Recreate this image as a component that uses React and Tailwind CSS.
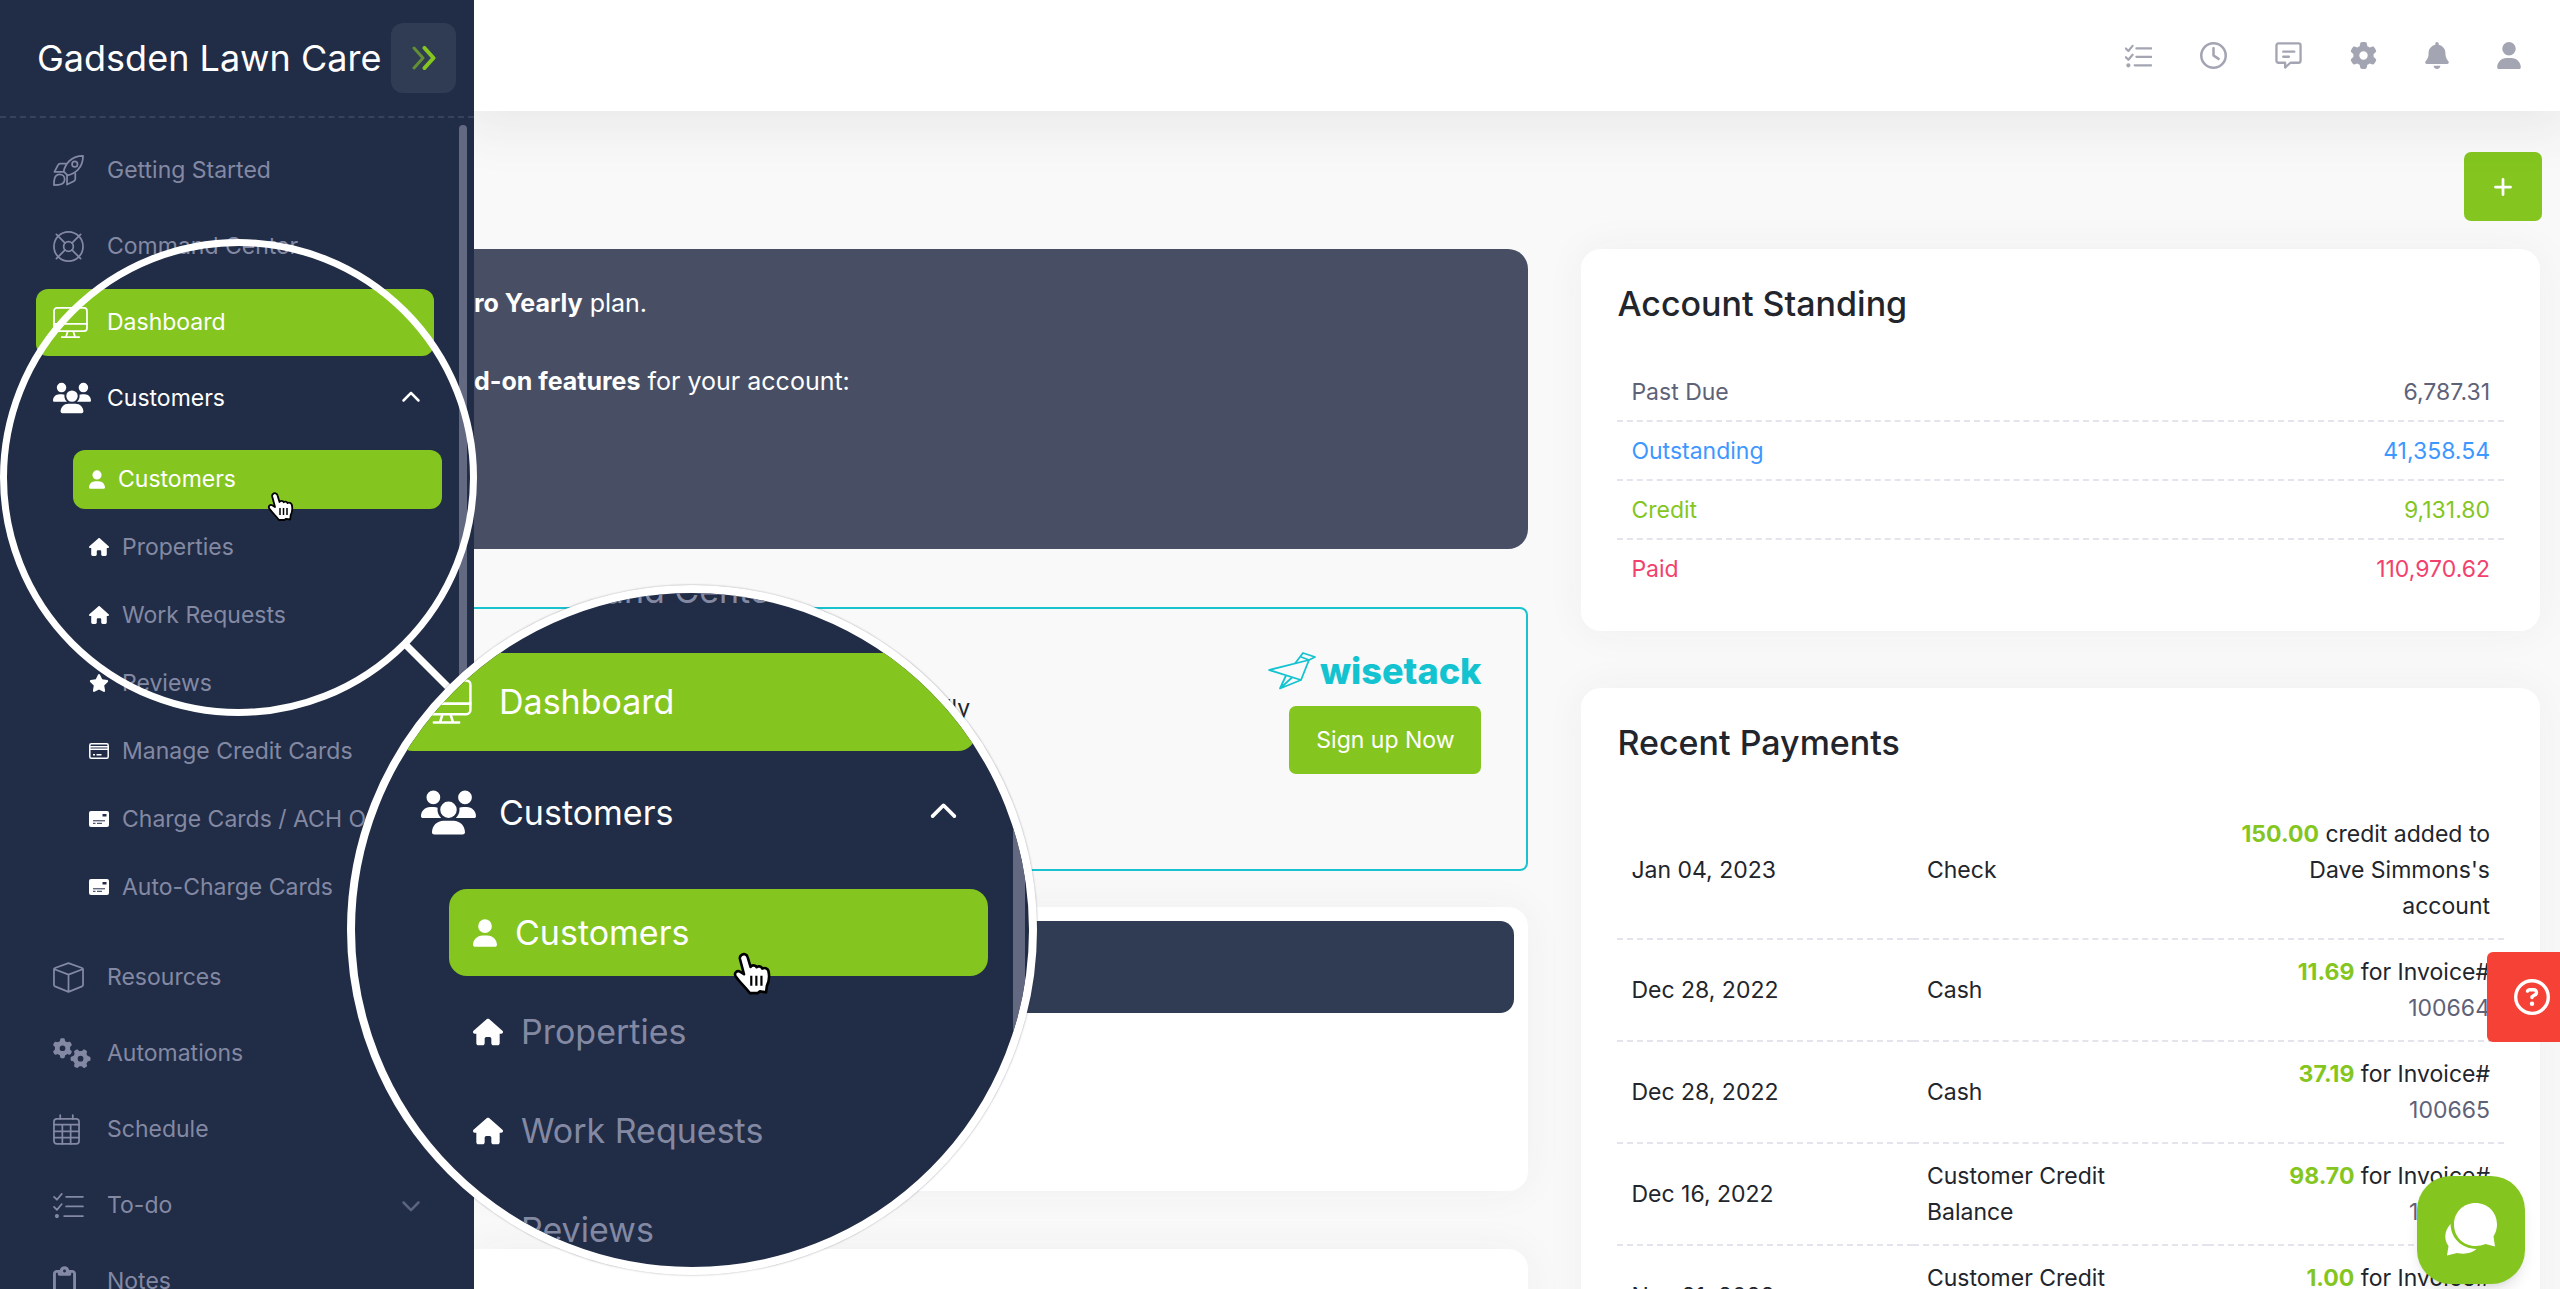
import {
  FaBell,
  FaChevronDown,
  FaChevronUp,
  FaGear,
  FaGears,
  FaHouse,
  FaPlus,
  FaRegCircleQuestion,
  FaRegClipboard,
  FaRegClock,
  FaStar,
  FaUser,
  FaUsers,
} from "react-icons/fa6";

function RocketIcon({ className }) {
  return (
    <svg viewBox="0 0 32 32" className={className} fill="none" stroke="currentColor" strokeWidth="1.8" strokeLinejoin="round" strokeLinecap="round">
      <path d="M11 17c1.500-7.500 7.500-16 20-16 0 12.500-8.500 18.500-16 20z" />
      <circle cx="22.500" cy="9.500" r="2.800" />
      <path d="M13 9H7.500c-1.200 0-2 .6-2.500 1.600L1.500 17.500H11" />
      <path d="M23 19v5.500c0 1.200-.6 2-1.600 2.500L14.500 30.500V21" />
      <path d="M1 31c0-5 .2-11 6-11 3 0 5 2.200 5 5 0 5.800-6 6-11 6z" />
    </svg>
  );
}

function LifeRingIcon({ className }) {
  return (
    <svg viewBox="0 0 32 32" className={className} fill="none" stroke="currentColor" strokeWidth="1.8" strokeLinecap="round">
      <circle cx="16" cy="16" r="15" />
      <circle cx="16" cy="16" r="5" />
      <path d="M3.500 3.500l9 9M28.500 3.500l-9 9M3.500 28.500l9-9M28.500 28.500l-9-9" />
    </svg>
  );
}

function MonitorIcon({ className }) {
  return (
    <svg viewBox="0 0 36 32" className={className} fill="none" stroke="currentColor" strokeWidth="1.8" strokeLinejoin="round" strokeLinecap="round">
      <rect x="1" y="1" width="34" height="24" rx="3" />
      <path d="M1 17.500h34M15 25.500l-1.500 5M21 25.500l1.500 5M9 31h18" />
    </svg>
  );
}

function CubeIcon({ className }) {
  return (
    <svg viewBox="0 0 32 32" className={className} fill="none" stroke="currentColor" strokeWidth="1.8" strokeLinejoin="round">
      <path d="M16 1.200L30 6.200q1 .4 1 1.400v16q0 1.200-1 1.600L16 30.800 2 25.200q-1-.4-1-1.600v-16q0-1 1-1.400zM1.500 7.500L16 13l14.500-5.500M16 13v17.500" />
    </svg>
  );
}

function CalendarIcon({ className }) {
  return (
    <svg viewBox="0 0 28 32" className={className} fill="none" stroke="currentColor" strokeWidth="1.8" strokeLinecap="round">
      <rect x="1" y="5" width="26" height="26" rx="3" />
      <path d="M7.500 1v4M20.500 1v4M1 11h26M1 18h26M1 24.500h26M9.700 11v20M18.300 11v20" />
    </svg>
  );
}

function TasksIcon({ className, strokeWidth = 1.8 }) {
  return (
    <svg viewBox="0 0 32 28" className={className} fill="none" stroke="currentColor" strokeWidth={strokeWidth} strokeLinecap="round" strokeLinejoin="round">
      <path d="M1 5l3 3 5-6M1 15.500l3 3 5-6M13.500 5H31M13.500 15H31M11.500 25H31" />
      <circle cx="4" cy="25" r="1.200" fill="currentColor" />
    </svg>
  );
}

function CommentIcon({ className }) {
  return (
    <svg viewBox="0 0 28 28" className={className} fill="none" stroke="currentColor" strokeWidth="2.400" strokeLinejoin="round" strokeLinecap="round">
      <path d="M3.500 1.500h21a2 2 0 0 1 2 2v16a2 2 0 0 1-2 2h-8.500l-5.500 5v-5h-7a2 2 0 0 1-2-2v-16a2 2 0 0 1 2-2z" />
      <path d="M8.500 10h11.500M8.500 15.300h6" />
    </svg>
  );
}

function CreditCardIcon({ className }) {
  return (
    <svg viewBox="0 0 20 16" className={className} fill="none" stroke="currentColor" strokeWidth="1.500">
      <rect x=".8" y=".8" width="18.400" height="14.400" rx="1.500" />
      <path d="M1 3.800h18M1 6.300h18M4 11.700h2M7.500 11.700h5" />
    </svg>
  );
}

function MoneyCheckIcon({ className }) {
  return (
    <svg viewBox="0 0 20 16" className={className}>
      <rect width="20" height="16" rx="2" fill="currentColor" />
      <path d="M13.500 3h4v2.500h-4z" fill="#212c46" />
      <path d="M4 9.800h12M4 12.300h2.500M8 12.300h5" stroke="#212c46" strokeWidth="1" />
    </svg>
  );
}

function DoubleChevronIcon({ className }) {
  return (
    <svg viewBox="0 0 24 24" className={className} fill="none" stroke="currentColor" strokeLinecap="round" strokeLinejoin="round">
      <path d="M2 2l9 10-9 10" strokeWidth="3" opacity=".6" />
      <path d="M12.500 2l9 10-9 10" strokeWidth="4" />
    </svg>
  );
}

function WisetackBird({ className }) {
  return (
    <svg viewBox="0 0 48 38" className={className} fill="none" stroke="currentColor" strokeWidth="1.800" strokeLinejoin="round">
      <path d="M1 18L41 8l-8 20z" />
      <path d="M27 11.500L35 1l12 4-6 3-9-3.500" />
      <path d="M18 23.500L12 36.500 33 28M12 36.500l12-11" />
    </svg>
  );
}

function ChatIcon({ className }) {
  return (
    <svg viewBox="0 0 52 54" className={className} fill="currentColor">
      <path d="M30.500 0C43 0 52 9.500 52 21.500c0 4.500-1.500 8.500-3.500 12L50 43.500l-9.500-2.500c-3 1.200-6.500 2-10 2C18 43 9 33.500 9 21.500S18 0 30.500 0z" />
      <path d="M5.500 21C6 35 16 45.500 31.500 46c-4.500 4.500-12 5.500-19.500 4L2 52.500 3.500 43C-1.500 36.500-.5 27.500 5.500 21z" />
    </svg>
  );
}

function HandCursor({ className }) {
  return (
    <svg viewBox="0 0 27 31" className={className} strokeLinejoin="round" aria-hidden="true">
      <path
        d="M6 3c1.500-1.500 4-.8 4.500 1.200L12.500 11c.5-1.500 3.500-1.500 4.200.2.700-1 3.300-.9 3.900.9 1.300-.9 3.700-.3 4.200 1.600.8 3.500.7 7-1.100 10.500l-.5 4.300-4.200-.7-1.500 1.200H12C9.500 25.500 5.500 22 2.300 17.500c-1.500-2.500.9-4.300 2.900-3.300L8 16 5.200 5.500C5 4.500 5.200 3.600 6 3z"
        fill="white"
        stroke="black"
        strokeWidth="1.800"
      />
      <path d="M13 17v7M16.500 17v7M20 17v7" stroke="black" strokeWidth="1.500" />
    </svg>
  );
}

const mainItems = [
  { label: "Getting Started", icon: <RocketIcon className="size-[31px]" /> },
  { label: "Command Center", icon: <LifeRingIcon className="size-[31px]" /> },
  { label: "Dashboard", icon: <MonitorIcon className="h-[31px] w-[35px]" />, active: true },
  { label: "Customers", icon: <FaUsers className="size-[38px]" />, open: true },
];

const customerItems = [
  { label: "Customers", icon: <FaUser className="h-[19px] w-4" />, active: true },
  { label: "Properties", icon: <FaHouse className="size-5" /> },
  { label: "Work Requests", icon: <FaHouse className="size-5" /> },
  { label: "Reviews", icon: <FaStar className="size-5" /> },
  { label: "Manage Credit Cards", icon: <CreditCardIcon className="h-4 w-5" /> },
  { label: "Charge Cards / ACH O", icon: <MoneyCheckIcon className="h-4 w-5" /> },
  { label: "Auto-Charge Cards", icon: <MoneyCheckIcon className="h-4 w-5" /> },
];

const moreItems = [
  { label: "Resources", icon: <CubeIcon className="size-[31px]" /> },
  { label: "Automations", icon: <FaGears className="size-[38px]" /> },
  { label: "Schedule", icon: <CalendarIcon className="h-[31px] w-[27px]" /> },
  { label: "To-do", icon: <TasksIcon className="h-[27px] w-[31px]" />, closed: true },
  { label: "Notes", icon: <FaRegClipboard className="h-[31px] w-[23px]" /> },
];

const standing = [
  { label: "Past Due", amount: "6,787.31", color: "text-[#5e6278]" },
  { label: "Outstanding", amount: "41,358.54", color: "text-[#3e97ff]" },
  { label: "Credit", amount: "9,131.80", color: "text-[#84c61f]" },
  { label: "Paid", amount: "110,970.62", color: "text-[#f1416c]" },
];

const payments = [
  { date: "Jan 04, 2023", method: "Check", amount: "150.00", text: "credit added to Dave Simmons's account" },
  { date: "Dec 28, 2022", method: "Cash", amount: "11.69", text: "for Invoice#", invoice: "100664" },
  { date: "Dec 28, 2022", method: "Cash", amount: "37.19", text: "for Invoice#", invoice: "100665" },
  { date: "Dec 16, 2022", method: "Customer Credit Balance", amount: "98.70", text: "for Invoice#", invoice: "100663" },
  { date: "Nov 21, 2022", method: "Customer Credit Balance", amount: "1.00", text: "for Invoice#", invoice: "100662" },
];

function NavItem({ item }) {
  const state = item.active
    ? "bg-[#84c61f] text-white"
    : item.open
      ? "text-white"
      : "text-[#8389a3]";
  return (
    <li className="flex h-[76px] items-center">
      <a href="#" className={`flex h-[67px] w-full items-center rounded-xl pr-[13px] pl-[17px] ${state}`}>
        <span className="w-[54px]">{item.icon}</span>
        <span className="flex-1">{item.label}</span>
        {item.open && <FaChevronUp className="size-5" />}
        {item.closed && <FaChevronDown className="size-5 opacity-60" />}
      </a>
    </li>
  );
}

function Sidebar() {
  return (
    <aside className="z-20 flex h-full w-[474px] shrink-0 flex-col overflow-hidden bg-[#212c46]">
      <div className="flex h-[118px] shrink-0 items-center justify-between border-b-2 border-dashed border-[#38425c] pr-[18px] pl-[37px]">
        <span className="text-[36px] whitespace-nowrap text-white">Gadsden Lawn Care</span>
        <button aria-label="Expand menu" className="flex h-[70px] w-[65px] items-center justify-center rounded-xl bg-[#303b54] text-[#84c61f]">
          <DoubleChevronIcon className="size-6" />
        </button>
      </div>
      <div className="flex min-h-0 flex-1 justify-between pr-[7px]">
        <nav className="w-[442px] pt-[14px] text-[23px] whitespace-nowrap">
          <ul className="pr-2 pl-9">
            {mainItems.map((item) => (
              <NavItem key={item.label} item={item} />
            ))}
          </ul>
          <ul className="mt-[9px] pl-[73px]">
            {customerItems.map((item) => (
              <li key={item.label} className="flex h-[68px] items-center">
                <a
                  href="#"
                  className={`flex h-[59px] w-full items-center gap-[13px] rounded-xl pl-4 ${item.active ? "bg-[#84c61f] text-white" : "text-[#8389a3]"}`}
                >
                  <span className="text-white">{item.icon}</span>
                  {item.label}
                </a>
              </li>
            ))}
          </ul>
          <ul className="mt-[18px] pr-2 pl-9">
            {moreItems.map((item) => (
              <NavItem key={item.label} item={item} />
            ))}
          </ul>
        </nav>
        <div className="mt-[7px] h-[640px] w-2 rounded-full bg-[#636981]" />
      </div>
    </aside>
  );
}

function TopBar() {
  return (
    <header className="relative z-10 flex h-[111px] shrink-0 items-center justify-end bg-white pr-[39px] text-[#a3a5b3] shadow-[0_10px_50px_10px_rgba(60,60,80,0.08)]">
      <div className="flex items-center gap-12">
        <button aria-label="Tasks"><TasksIcon className="h-6 w-[27px]" strokeWidth={2.6} /></button>
        <button aria-label="Time clock"><FaRegClock className="size-[27px]" /></button>
        <button aria-label="Messages"><CommentIcon className="size-[27px]" /></button>
        <button aria-label="Settings"><FaGear className="size-[27px]" /></button>
        <button aria-label="Notifications"><FaBell className="h-[27px] w-6" /></button>
        <button aria-label="Profile"><FaUser className="h-[27px] w-6" /></button>
      </div>
    </header>
  );
}

function Card({ title, children }) {
  return (
    <section className="rounded-[20px] bg-white px-9 pb-[34px] shadow-[0_0_40px_rgba(60,60,80,0.05)]">
      <h2 className="pt-8 pb-9 text-[34px] leading-[46px] font-medium text-[#22252b]">{title}</h2>
      {children}
    </section>
  );
}

function AccountStanding() {
  return (
    <Card title="Account Standing">
      <table className="w-full table-fixed leading-9">
        <tbody>
          {standing.map((row) => (
            <tr key={row.label} className={`border-b-2 border-dashed border-[#e4e5ec] last:border-0 ${row.color}`}>
              <td className="w-2/3 px-[14px] pt-[11px] pb-[10px]">{row.label}</td>
              <td className="px-[14px] pt-[11px] pb-[10px] text-right">{row.amount}</td>
            </tr>
          ))}
        </tbody>
      </table>
    </Card>
  );
}

function RecentPayments() {
  return (
    <Card title="Recent Payments">
      <table className="w-full table-fixed leading-9 text-[#22252b]">
        <tbody>
          {payments.map((row) => (
            <tr key={row.date + row.amount} className="border-b-2 border-dashed border-[#e4e5ec]">
              <td className="px-[14px] py-[14px]">{row.date}</td>
              <td className="px-[14px] py-[14px]">{row.method}</td>
              <td className="px-[14px] py-[14px] text-right">
                <b className="font-bold text-[#84c61f]">{row.amount}</b> {row.text}
                {row.invoice && (
                  <a href="#" className="block text-[#5e6278]">
                    {row.invoice}
                  </a>
                )}
              </td>
            </tr>
          ))}
        </tbody>
      </table>
    </Card>
  );
}

function Content() {
  return (
    <main className="min-h-0 flex-1 overflow-hidden pt-[41px] pr-5">
      <div className="mb-7 flex justify-end">
        <button aria-label="Add" className="-mr-[2px] flex h-[69px] w-[78px] items-center justify-center rounded-[7px] bg-[#84c61f] text-white">
          <FaPlus className="size-[22px]" />
        </button>
      </div>
      <div className="grid grid-cols-[11fr_10fr] items-start gap-x-[53px] text-[23px]">
        <div>
          <section className="h-[300px] rounded-r-[20px] bg-[#484f65] pt-9 text-[25px] leading-9 text-white">
            <p>
              <b>ro Yearly</b> plan.
            </p>
            <p className="mt-[42px]">
              <b>d-on features</b> for your account:
            </p>
          </section>
          <section className="mt-[58px] flex h-[264px] justify-between rounded-r-lg border-2 border-l-0 border-[#19c2cf] pt-[42px] pr-[45px]">
            <p className="pt-10 pl-[459px] text-[#22252b]">ally</p>
            <div className="flex flex-col items-end">
              <div className="flex h-10 items-center gap-1 text-[#14c3d0]">
                <WisetackBird className="h-[38px] w-12" />
                <span className="text-[36px] leading-10 font-extrabold">wisetack</span>
              </div>
              <button className="mt-[15px] h-[68px] w-[192px] rounded-[7px] bg-[#84c61f] text-white">Sign up Now</button>
            </div>
          </section>
          <section className="mt-9 h-[284px] rounded-r-[20px] bg-white pt-[14px] pr-[14px] shadow-[0_0_40px_rgba(60,60,80,0.05)]">
            <div className="h-[92px] rounded-r-[14px] bg-[#303b54]" />
          </section>
          <section className="mt-[58px] h-[284px] rounded-r-[20px] bg-white shadow-[0_0_40px_rgba(60,60,80,0.05)]" />
        </div>
        <div className="flex flex-col gap-[57px]">
          <AccountStanding />
          <RecentPayments />
        </div>
      </div>
    </main>
  );
}

// Magnified view of the Customers menu
function Magnifier() {
  return (
    <div aria-hidden="true" className="absolute top-0 left-0 z-30">
      <div className="absolute top-[239px] left-0 size-[477px] rounded-full border-[7px] border-white" />
      <svg className="absolute top-[640px] left-[400px] size-[60px]" viewBox="0 0 60 60">
        <path d="M4 3l50 50" stroke="white" strokeWidth="7" />
      </svg>
      <div className="absolute top-[585px] left-[347px] size-[690px] overflow-hidden rounded-full border-8 border-white bg-[#212c46] text-[34px] whitespace-nowrap text-[#8389a3] shadow-[0_0_2px_rgba(60,60,80,0.5)]">
        <div className="-mt-[58px] flex h-[111px] items-center pl-[145px]">Command Center</div>
        <div className="flex h-[111px] items-center pr-[53px] pl-10">
          <div className="flex h-[98px] w-full items-center rounded-[18px] bg-[#84c61f] pl-[26px] text-white">
            <MonitorIcon className="mr-[27px] h-[45px] w-[51px]" />
            Dashboard
          </div>
        </div>
        <div className="flex h-[111px] items-center pr-[71px] pl-[66px] text-white">
          <FaUsers className="mr-[23px] size-[55px]" />
          <span className="flex-1">Customers</span>
          <FaChevronUp className="size-[29px]" />
        </div>
        <div className="mt-[15px] pr-[41px] pl-[94px]">
          <div className="flex h-[99px] items-center">
            <div className="flex h-[87px] w-full items-center gap-[18px] rounded-[18px] bg-[#84c61f] pl-6 text-white">
              <FaUser className="h-[28px] w-6" />
              Customers
            </div>
          </div>
          <div className="flex h-[99px] items-center gap-[18px] pl-6">
            <FaHouse className="size-[30px] text-white" />
            Properties
          </div>
          <div className="flex h-[99px] items-center gap-[18px] pl-6">
            <FaHouse className="size-[30px] text-white" />
            Work Requests
          </div>
          <div className="flex h-[99px] items-center gap-[18px] pl-6">
            <FaStar className="size-[30px] text-white" />
            Reviews
          </div>
        </div>
        <div className="absolute top-0 right-[4px] h-full w-3 bg-[#636981]" />
      </div>
      <HandCursor className="absolute top-[491px] left-[267px] h-[31px] w-[27px]" />
      <HandCursor className="absolute top-[951px] left-[732px] h-[45px] w-[40px]" />
    </div>
  );
}

export default function App() {
  return (
    <div className="relative flex h-screen overflow-hidden bg-[#f9f9f9] font-[Inter,sans-serif]">
      <Sidebar />
      <div className="flex min-w-0 flex-1 flex-col">
        <TopBar />
        <Content />
      </div>
      <Magnifier />
      <button aria-label="Help" className="absolute top-[952px] right-0 z-20 flex h-[90px] w-[73px] items-center rounded-l-md bg-[#f64236] pl-[27px] text-white">
        <FaRegCircleQuestion className="size-9" />
      </button>
      <button aria-label="Open chat" className="absolute right-[35px] bottom-[5px] z-20 flex size-[108px] items-center justify-center rounded-[34px] bg-[#84c61f] text-white shadow-lg">
        <ChatIcon className="h-[54px] w-[52px]" />
      </button>
    </div>
  );
}
